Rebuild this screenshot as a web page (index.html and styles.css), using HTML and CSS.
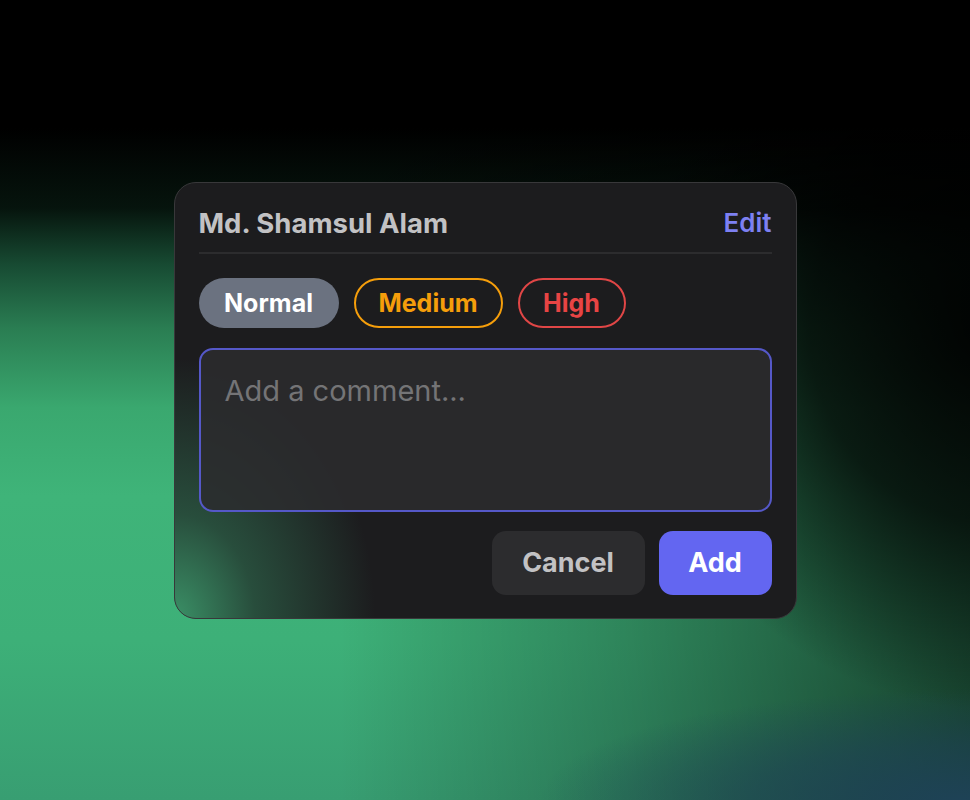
FILE: index.html
```html
<!DOCTYPE html>
<html lang="en">
<head>
<meta charset="utf-8">
<title>Comment</title>
<link rel="stylesheet" href="styles.css">
</head>
<body>
<div class="stage">
  <div class="card">
    <div class="card-head">
      <span class="name">Md. Shamsul Alam</span>
      <span class="edit">Edit</span>
    </div>
    <div class="pills">
      <span class="pill pill-normal">Normal</span>
      <span class="pill pill-medium">Medium</span>
      <span class="pill pill-high">High</span>
    </div>
    <div class="comment">Add a comment...</div>
    <div class="actions">
      <button class="btn btn-cancel">Cancel</button>
      <button class="btn btn-add">Add</button>
    </div>
  </div>
</div>
</body>
</html>
```
FILE: styles.css
```css
html, body {
  margin: 0;
  padding: 0;
}
body {
  width: 970px;
  height: 800px;
  overflow: hidden;
  font-family: Inter, "Liberation Sans", sans-serif;
  background:
    radial-gradient(ellipse 420px 110px at 960px 800px, rgba(30,66,86,1) 0%, rgba(30,66,86,0.6) 50%, rgba(30,66,86,0) 100%),
    radial-gradient(ellipse 360px 380px at 990px 330px, rgba(0,0,0,0.95) 0%, rgba(0,0,0,0.7) 50%, rgba(0,0,0,0) 100%),
    linear-gradient(90deg, rgba(0,0,0,0) 0%, rgba(0,0,0,0) 35%, rgba(0,0,0,0.25) 65%, rgba(0,0,0,0.6) 100%),
    linear-gradient(180deg, #000 0%, #000 16%, #06140d 26%, #174a32 33%, #2a7d52 41%, #3aa86f 51%, #3fb479 62%, #3db078 80%, #389e72 100%);
}
.stage {
  width: 970px;
  height: 800px;
  display: flex;
  align-items: center;
  justify-content: center;
}
.card {
  box-sizing: border-box;
  width: 623px;
  height: 437px;
  border: 1px solid #38383a;
  border-radius: 22px;
  padding: 25px 24px 23px;
  background:
    radial-gradient(ellipse 200px 260px at 0% 100%, rgba(60,150,106,0.95) 0%, rgba(48,110,80,0.6) 40%, rgba(28,28,30,0) 100%),
    #1c1c1e;
  display: flex;
  flex-direction: column;
}
.card-head {
  display: flex;
  justify-content: space-between;
  align-items: center;
  height: 30px;
  padding-bottom: 14px;
  border-bottom: 2px solid #2c2c2e;
  margin-bottom: 24px;
}
.name {
  font-size: 27.5px;
  font-weight: 700;
  color: #c2c2c4;
}
.edit {
  font-size: 26px;
  font-weight: 600;
  color: #7d80f2;
}
.pills {
  display: flex;
  gap: 15px;
  height: 50px;
  margin-bottom: 20px;
}
.pill {
  box-sizing: border-box;
  height: 50px;
  border-radius: 25px;
  display: flex;
  align-items: center;
  justify-content: center;
  font-size: 25px;
  font-weight: 700;
}
.pill-normal {
  width: 140px;
  background: #6b7280;
  color: #ffffff;
}
.pill-medium {
  width: 149px;
  border: 2px solid #f59e0b;
  color: #f59e0b;
}
.pill-high {
  width: 108px;
  border: 2px solid #e04646;
  color: #e84444;
}
.comment {
  box-sizing: border-box;
  height: 164px;
  border: 2px solid #5558c8;
  border-radius: 14px;
  background: rgba(44,44,46,0.85);
  padding: 21px 24px;
  font-size: 29px;
  line-height: 40px;
  color: #747476;
  margin-bottom: 19px;
}
.actions {
  display: flex;
  justify-content: flex-end;
  gap: 14px;
}
.btn {
  height: 64px;
  border: none;
  border-radius: 14px;
  font-family: inherit;
  font-size: 27px;
  font-weight: 700;
  padding: 0;
}
.btn-cancel {
  width: 153px;
  background: #2c2c2e;
  color: #c2c2c4;
}
.btn-add {
  width: 113px;
  background: #6366f1;
  color: #ffffff;
}
```
